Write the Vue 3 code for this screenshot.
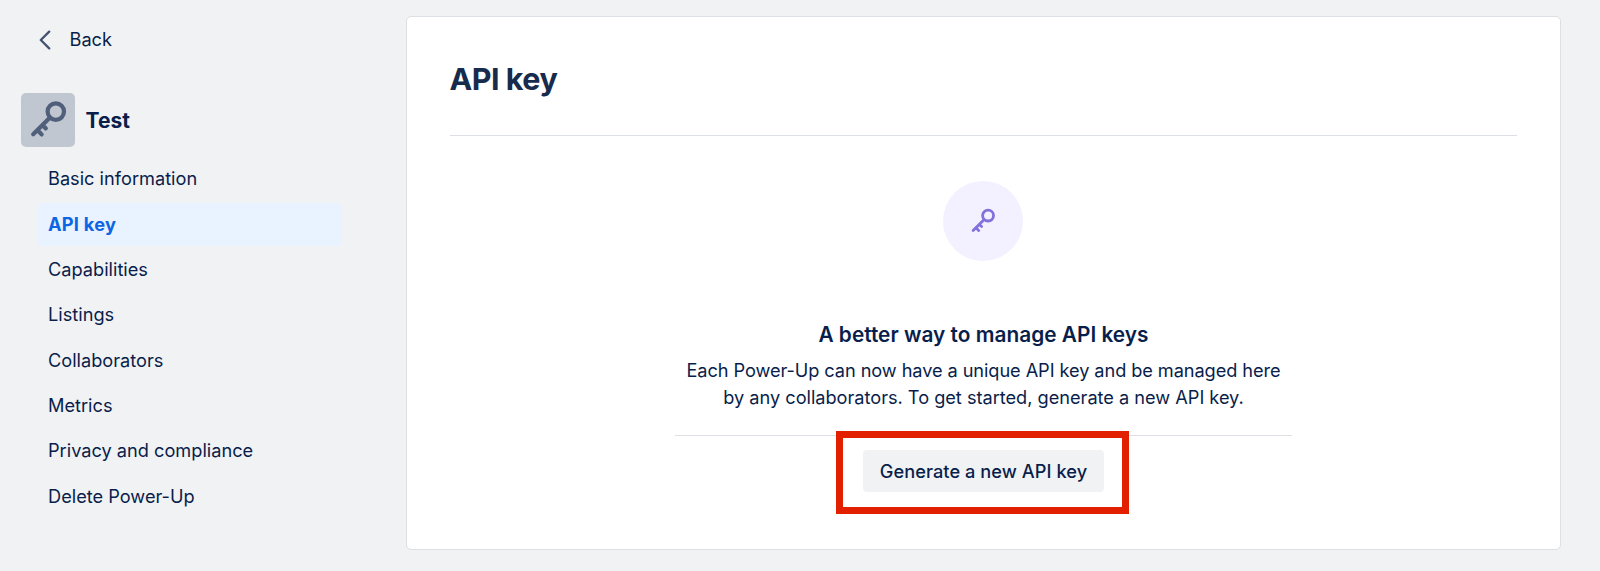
<script setup>
const items = [
  'Basic information',
  'API key',
  'Capabilities',
  'Listings',
  'Collaborators',
  'Metrics',
  'Privacy and compliance',
  'Delete Power-Up',
]
const active = 'API key'
</script>

<template>
  <div class="page">
    <aside class="sidebar">
      <a class="back">
        <svg class="chevron" viewBox="0 0 12 20">
          <path d="M10.2 1.6 L1.8 10 L10.2 18.4" />
        </svg>
        <span>Back</span>
      </a>
      <div class="app">
        <div class="avatar">
          <svg class="key" viewBox="0 0 36 36">
            <circle cx="25.8" cy="9.6" r="8.2" />
            <path d="M20 15.6 L3.2 32.2 M7.6 28.2 L11.6 32.4 M12.5 23.3 L15.8 26.4" />
          </svg>
        </div>
        <span class="app-name">Test</span>
      </div>
      <nav class="nav">
        <a v-for="item in items" :key="item" class="item" :class="{ active: item === active }">
          <span>{{ item }}</span>
        </a>
      </nav>
    </aside>

    <main class="card">
      <h1 class="title">API key</h1>
      <section class="empty">
        <div class="badge">
          <svg class="key" viewBox="0 0 36 36">
            <circle cx="25.6" cy="9.8" r="8.2" />
            <path d="M19.8 15.8 L3.2 32.4 M7.6 28.2 L11.6 32.4 M12.5 23.3 L15.8 26.4" />
          </svg>
        </div>
        <h2 class="heading">A better way to manage API keys</h2>
        <p class="text">
          <span class="line1">Each Power-Up can now have a unique API key and be managed here</span><br />
          <span class="line2">by any collaborators. To get started, generate a new API key.</span>
        </p>
        <div class="action">
          <button class="button"><span>Generate a new API key</span></button>
          <div class="highlight"></div>
        </div>
      </section>
    </main>
  </div>
</template>

<style>
body {
  background: #f1f2f4;
}
</style>

<style scoped>
.page {
  display: flex;
  box-sizing: border-box;
  height: 571px;
  padding: 16px 39px 21px 21px;
  overflow: hidden;
  background: #f1f2f4;
  color: #091e4b;
  font-family: Inter, "Liberation Sans", sans-serif;
  font-size: 18.2px;
}
.sidebar {
  width: 320px;
  margin-right: 65px;
  flex: none;
}
.back {
  display: flex;
  align-items: center;
  height: 48px;
  padding-left: 17.5px;
}
.chevron {
  width: 12px;
  height: 20px;
  margin-right: 19px;
}
.chevron path {
  fill: none;
  stroke: #44546f;
  stroke-width: 2.3;
  stroke-linecap: round;
  stroke-linejoin: round;
}
.back span {
  position: relative;
  top: -1px;
}
.app {
  display: flex;
  align-items: center;
  margin-top: 29px;
}
.avatar {
  display: flex;
  align-items: center;
  justify-content: center;
  width: 54px;
  height: 54px;
  border-radius: 5px;
  background: #c1c7d1;
}
.key {
  width: 36px;
  height: 36px;
  overflow: visible;
  fill: none;
  stroke: #505f7a;
  stroke-width: 4.2;
  stroke-linecap: round;
}
.app-name {
  margin-left: 10.5px;
  font-size: 21px;
  font-weight: 650;
}
.nav {
  display: flex;
  flex-direction: column;
  gap: 2.67px;
  margin: 10.5px 0 0 16.5px;
}
.item {
  display: flex;
  align-items: center;
  height: 42.7px;
  padding-left: 10.5px;
  border-radius: 4px;
  width: 293.5px;
}
.item span {
  margin-top: -1px;
}
.item.active {
  background: #e9f2ff;
  color: #0c66e4;
  font-weight: 700;
  letter-spacing: 0.25px;
}
.card {
  flex: 1;
  box-sizing: border-box;
  padding: 0 43px;
  border: 1.4px solid #dcdfe4;
  border-radius: 5px;
  background: #fff;
}
.title {
  display: flex;
  align-items: center;
  box-sizing: border-box;
  height: 119px;
  margin: 0 0 0 -0.5px;
  padding-top: 5px;
  border-bottom: 1.4px solid #dcdfe4;
  color: #172b4d;
  font-size: 30.5px;
  font-weight: 650;
  letter-spacing: -0.5px;
}
.empty {
  display: flex;
  flex-direction: column;
  align-items: center;
}
.badge {
  display: flex;
  align-items: center;
  justify-content: center;
  width: 80px;
  height: 80px;
  margin: 45.2px 0.5px 0 0;
  border-radius: 50%;
  background: #f3f0ff;
}
.badge .key {
  width: 24px;
  height: 24px;
  stroke: #8270db;
}
.heading {
  margin: 59.8px 0 0;
  font-size: 20.8px;
  line-height: 27px;
  font-weight: 620;
  letter-spacing: 0.03px;
  white-space: nowrap;
}
.text {
  margin: 9px 0 0;
  line-height: 27px;
  text-align: center;
  white-space: nowrap;
}
.line1 {
  letter-spacing: -0.08px;
}
.line2 {
  letter-spacing: -0.02px;
}
.action {
  position: relative;
  display: flex;
  justify-content: center;
  width: 617px;
  margin-top: 24.3px;
  padding-top: 13.5px;
  border-top: 1px solid #dcdfe4;
}
.button {
  width: 241px;
  height: 42.5px;
  padding: 0;
  border: 0;
  border-radius: 4px;
  background: #f1f2f4;
  color: inherit;
  font: inherit;
  font-weight: 500;
  letter-spacing: 0.06px;
  white-space: nowrap;
}
.highlight {
  position: absolute;
  box-sizing: border-box;
  top: -5px;
  left: 161px;
  width: 293px;
  height: 82.5px;
  border: 7px solid #e22000;
}
</style>
